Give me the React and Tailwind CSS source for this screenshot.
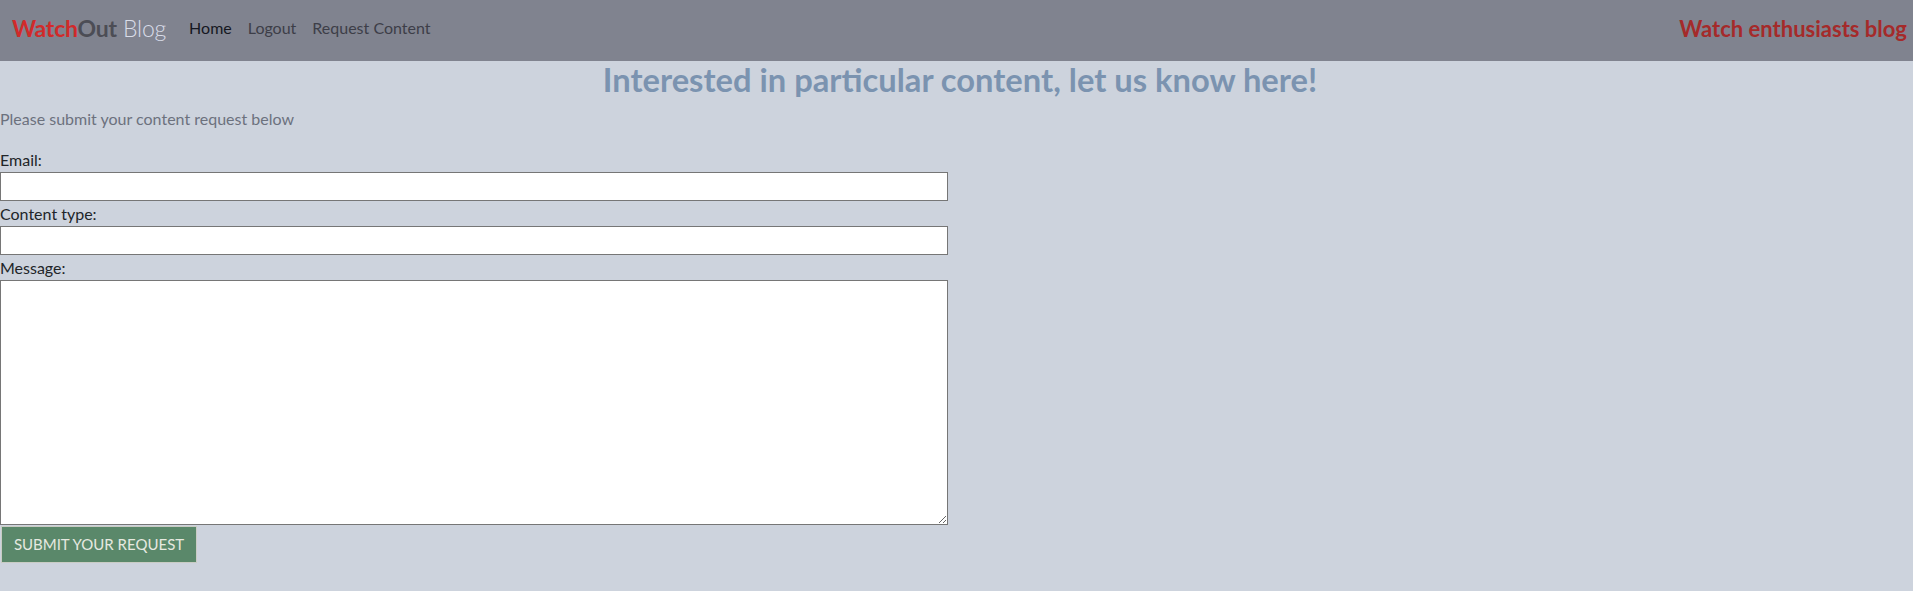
import React from 'react';

const navLinks = [
  { label: 'Home', active: true },
  { label: 'Logout' },
  { label: 'Request Content' },
];

export default function App() {
  return (
    <div className="min-h-[591px] bg-[#cdd3dd] font-['Lato',sans-serif] text-[#212529]">
      <nav className="h-[61px] bg-[#80838f] flex items-center justify-between pl-[12px] pr-[6px] pb-[5px]">
        <div className="flex items-center">
          <a href="#" className="text-[23px] leading-none mr-[15px] tracking-[-0.2px]">
            <span className="font-bold text-[#d12a2a]">Watch</span>
            <span className="font-bold text-[#4c4d55]">Out</span>
            <span className="font-light text-[#d9dde9]"> Blog</span>
          </a>
          <ul className="flex items-center">
            {navLinks.map((l) => (
              <li key={l.label}>
                <a
                  href="#"
                  className={`block px-[8px] text-[16px] ${l.active ? 'text-[#161822]' : 'text-[#3d3e48]'}`}
                >
                  {l.label}
                </a>
              </li>
            ))}
          </ul>
        </div>
        <span className="text-[22px] font-bold text-[#a52a2a]">Watch enthusiasts blog</span>
      </nav>

      <main>
        <h2 className="text-center text-[32.7px] font-bold text-[#7b93b0] leading-[38px] mt-0 pl-[7px]">
          Interested in particular content, let us know here!
        </h2>
        <p className="text-[16px] leading-[24px] text-[#6c717d] mt-[8px] mb-[16px]">
          Please submit your content request below
        </p>
        <form className="w-[948px]" onSubmit={(e) => e.preventDefault()}>
          <label className="block text-[16px] leading-[25px]">Email:</label>
          <input type="email" className="block w-full h-[29px] bg-white border border-[#767676]" />
          <label className="block text-[16px] leading-[25px]">Content type:</label>
          <input type="text" className="block w-full h-[29px] bg-white border border-[#767676]" />
          <label className="block text-[16px] leading-[25px]">Message:</label>
          <textarea className="block w-full h-[245px] bg-white border border-[#767676]" />
          <button
            type="submit"
            className="mt-[1px] ml-[1px] h-[37px] w-[196px] bg-[#5a886a] border border-[#c9ccc4] text-[#e6e9e0] text-[15px] uppercase"
          >
            Submit your request
          </button>
        </form>
      </main>
    </div>
  );
}
